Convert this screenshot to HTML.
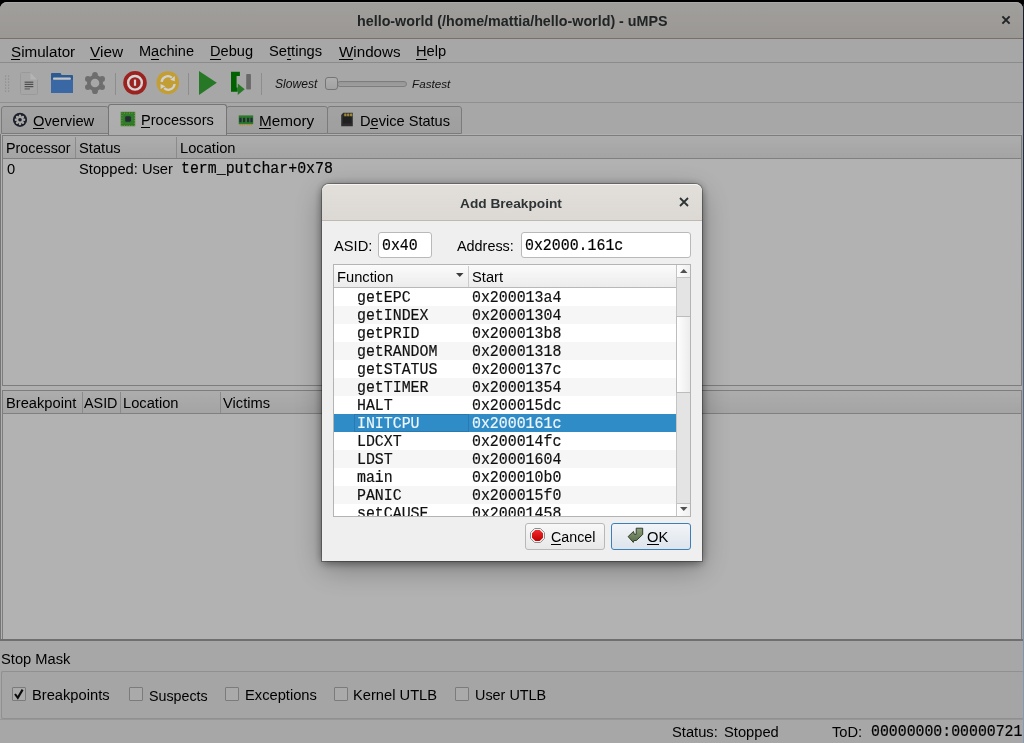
<!DOCTYPE html><html><head><meta charset="utf-8"><style>
*{box-sizing:border-box;margin:0;padding:0}
html,body{width:1024px;height:743px;overflow:hidden;background:#000;font-family:"Liberation Sans",sans-serif}
.t{position:absolute;line-height:1;white-space:nowrap;will-change:transform}
.b{position:absolute}
.m{-webkit-text-stroke:0.18px currentColor}
svg.b{overflow:visible}

</style></head><body>
<div class="b" style="left:0px;top:2px;width:1023px;height:741px;background:#efefef;border-radius:7px 7px 0 0"></div>
<div class="b" style="left:0px;top:2px;width:1023px;height:37px;background:linear-gradient(#e6e3df,#dedad5);border-radius:7px 7px 0 0;border-top:1px solid #f6f4f2;border-bottom:1px solid #aaa39b"></div>
<div class="t" style="left:356.8px;top:14.40px;font-size:14.3px;color:#2e3436;font-weight:bold;font-style:normal;font-family:'Liberation Sans', sans-serif;">hello-world (/home/mattia/hello-world) - uMPS</div>
<svg class="b" style="left:1001px;top:15px" width="10" height="10" viewBox="0 0 10 10"><path d="M1.4 1.4L8.6 8.6M8.6 1.4L1.4 8.6" stroke="#2e3436" stroke-width="2"/></svg>
<div class="b" style="left:0px;top:39px;width:1023px;height:24px;background:#efefef;border-bottom:1px solid #c8c8c8"></div>
<div class="t" style="left:10.6px;top:43.93px;font-size:15.2px;color:#000000;font-weight:normal;font-style:normal;font-family:'Liberation Sans', sans-serif;">Simulator</div>
<div class="b" style="left:10.6px;top:58.8px;width:9.8px;height:1px;background:#000000"></div>
<div class="t" style="left:90px;top:43.76px;font-size:15.4px;color:#000000;font-weight:normal;font-style:normal;font-family:'Liberation Sans', sans-serif;">View</div>
<div class="b" style="left:90.0px;top:58.8px;width:9.8px;height:1px;background:#000000"></div>
<div class="t" style="left:138.7px;top:44.48px;font-size:14.55px;color:#000000;font-weight:normal;font-style:normal;font-family:'Liberation Sans', sans-serif;">Machine</div>
<div class="b" style="left:150.93px;top:58.8px;width:8.17px;height:1px;background:#000000"></div>
<div class="t" style="left:209.9px;top:44.44px;font-size:14.6px;color:#000000;font-weight:normal;font-style:normal;font-family:'Liberation Sans', sans-serif;">Debug</div>
<div class="b" style="left:209.9px;top:58.8px;width:10.61px;height:1px;background:#000000"></div>
<div class="t" style="left:268.6px;top:44.36px;font-size:14.7px;color:#000000;font-weight:normal;font-style:normal;font-family:'Liberation Sans', sans-serif;">Settings</div>
<div class="b" style="left:286.57px;top:58.8px;width:4.08px;height:1px;background:#000000"></div>
<div class="t" style="left:338.8px;top:43.93px;font-size:15.2px;color:#000000;font-weight:normal;font-style:normal;font-family:'Liberation Sans', sans-serif;">Windows</div>
<div class="b" style="left:338.8px;top:58.8px;width:13.86px;height:1px;background:#000000"></div>
<div class="t" style="left:416.2px;top:44.36px;font-size:14.7px;color:#000000;font-weight:normal;font-style:normal;font-family:'Liberation Sans', sans-serif;">Help</div>
<div class="b" style="left:416.2px;top:58.8px;width:10.61px;height:1px;background:#000000"></div>
<div class="b" style="left:0px;top:63px;width:1023px;height:40px;background:#efefef;border-bottom:1px solid #cfcfcf"></div>
<div class="b" style="left:115px;top:73px;width:1px;height:22px;background:#cbcbcb"></div>
<div class="b" style="left:188px;top:73px;width:1px;height:22px;background:#cbcbcb"></div>
<div class="b" style="left:261px;top:73px;width:1px;height:22px;background:#cbcbcb"></div>
<div class="t" style="left:274.8px;top:77.86px;font-size:12.1px;color:#1a1a1a;font-weight:normal;font-style:italic;font-family:'Liberation Sans', sans-serif;">Slowest</div>
<div class="b" style="left:337px;top:81px;width:70px;height:6px;background:linear-gradient(#d8d8d8,#e4e4e4);border:1px solid #b4b4b4;border-radius:3px"></div>
<div class="b" style="left:325px;top:77px;width:13px;height:13px;background:linear-gradient(#fafafa,#e8e8e8);border:1px solid #a8a8a8;border-radius:3px"></div>
<div class="t" style="left:411.9px;top:78.20px;font-size:11.7px;color:#1a1a1a;font-weight:normal;font-style:italic;font-family:'Liberation Sans', sans-serif;">Fastest</div>
<div class="b" style="left:0px;top:134px;width:1023px;height:507px;background:#fdfdfd;border:1px solid #a8a8a8;border-top:none;border-right-color:#e8e8e8"></div>
<div class="b" style="left:1px;top:106px;width:108px;height:28px;background:linear-gradient(#eaeaea,#e3e3e3);border:1px solid #b0b0b0;border-radius:3px 3px 0 0"></div>
<div class="b" style="left:226px;top:106px;width:102px;height:28px;background:linear-gradient(#eaeaea,#e3e3e3);border:1px solid #b0b0b0;border-radius:3px 3px 0 0"></div>
<div class="b" style="left:327px;top:106px;width:135px;height:28px;background:linear-gradient(#eaeaea,#e3e3e3);border:1px solid #b0b0b0;border-radius:3px 3px 0 0"></div>
<div class="b" style="left:108px;top:104px;width:119px;height:32px;background:linear-gradient(#fbfbfb,#f6f6f6);border:1px solid #a8a8a8;border-bottom:none;border-radius:3px 3px 0 0"></div>
<div class="t" style="left:32.8px;top:113.66px;font-size:14.7px;color:#000000;font-weight:normal;font-style:normal;font-family:'Liberation Sans', sans-serif;">Overview</div>
<div class="b" style="left:32.8px;top:128.1px;width:11.42px;height:1px;background:#000000"></div>
<div class="t" style="left:140.6px;top:113.08px;font-size:14.55px;color:#000000;font-weight:normal;font-style:normal;font-family:'Liberation Sans', sans-serif;">Processors</div>
<div class="b" style="left:140.6px;top:127.39999999999999px;width:9.8px;height:1px;background:#000000"></div>
<div class="t" style="left:258.6px;top:113.15px;font-size:15.3px;color:#000000;font-weight:normal;font-style:normal;font-family:'Liberation Sans', sans-serif;">Memory</div>
<div class="b" style="left:258.6px;top:128.1px;width:12.23px;height:1px;background:#000000"></div>
<div class="t" style="left:359.6px;top:113.74px;font-size:14.6px;color:#000000;font-weight:normal;font-style:normal;font-family:'Liberation Sans', sans-serif;">Device Status</div>
<div class="b" style="left:370.21px;top:128.1px;width:8.17px;height:1px;background:#000000"></div>
<div class="b" style="left:2px;top:135px;width:1020px;height:251px;background:#ffffff;border:1px solid #b4b4b4"></div>
<div class="b" style="left:3px;top:136px;width:1018px;height:23px;background:linear-gradient(#f8f8f8,#ebebeb);border-bottom:1px solid #b8b8b8"></div>
<div class="b" style="left:75px;top:137px;width:1px;height:21px;background:#c8c8c8"></div>
<div class="b" style="left:176px;top:137px;width:1px;height:21px;background:#c8c8c8"></div>
<div class="t" style="left:5.9px;top:141.45px;font-size:14.35px;color:#000000;font-weight:normal;font-style:normal;font-family:'Liberation Sans', sans-serif;">Processor</div>
<div class="t" style="left:79px;top:141.16px;font-size:14.7px;color:#000000;font-weight:normal;font-style:normal;font-family:'Liberation Sans', sans-serif;">Status</div>
<div class="t" style="left:180px;top:141.16px;font-size:14.7px;color:#000000;font-weight:normal;font-style:normal;font-family:'Liberation Sans', sans-serif;">Location</div>
<div class="t" style="left:6.6px;top:161.76px;font-size:14.7px;color:#000000;font-weight:normal;font-style:normal;font-family:'Liberation Sans', sans-serif;">0</div>
<div class="t" style="left:79.2px;top:161.76px;font-size:14.7px;color:#000000;font-weight:normal;font-style:normal;font-family:'Liberation Sans', sans-serif;">Stopped: User</div>
<div class="t m" style="left:181px;top:161.98px;font-size:14.9px;color:#000000;font-weight:normal;font-style:normal;font-family:'Liberation Mono', monospace;transform:scaleY(1.135);transform-origin:0 11.42px;">term_putchar+0x78</div>
<div class="b" style="left:2px;top:390px;width:1020px;height:251px;background:#ffffff;border:1px solid #b4b4b4"></div>
<div class="b" style="left:3px;top:391px;width:1018px;height:23px;background:linear-gradient(#f8f8f8,#ebebeb);border-bottom:1px solid #b8b8b8"></div>
<div class="b" style="left:82px;top:392px;width:1px;height:21px;background:#c8c8c8"></div>
<div class="b" style="left:120px;top:392px;width:1px;height:21px;background:#c8c8c8"></div>
<div class="b" style="left:220px;top:392px;width:1px;height:21px;background:#c8c8c8"></div>
<div class="t" style="left:5.6px;top:395.86px;font-size:14.7px;color:#000000;font-weight:normal;font-style:normal;font-family:'Liberation Sans', sans-serif;">Breakpoint</div>
<div class="t" style="left:84.4px;top:396.15px;font-size:14.35px;color:#000000;font-weight:normal;font-style:normal;font-family:'Liberation Sans', sans-serif;">ASID</div>
<div class="t" style="left:123.4px;top:395.86px;font-size:14.7px;color:#000000;font-weight:normal;font-style:normal;font-family:'Liberation Sans', sans-serif;">Location</div>
<div class="t" style="left:223.4px;top:395.86px;font-size:14.7px;color:#000000;font-weight:normal;font-style:normal;font-family:'Liberation Sans', sans-serif;">Victims</div>
<div class="b" style="left:0px;top:639px;width:1023px;height:2px;background:#a0a0a0"></div>
<div class="t" style="left:0.6px;top:651.76px;font-size:14.7px;color:#000000;font-weight:normal;font-style:normal;font-family:'Liberation Sans', sans-serif;">Stop Mask</div>
<div class="b" style="left:1px;top:671px;width:1023px;height:48px;border:1px solid #cfcfcf;border-right:none;border-radius:2px;background:#ececec"></div>
<div class="b" style="left:12px;top:687px;width:14px;height:14px;background:#f4f4f4;border:1px solid #b0b0b0;border-radius:1px"></div>
<svg class="b" style="left:12px;top:687px" width="14" height="14" viewBox="0 0 14 14"><path d="M3 7L5.8 10.8L10.6 2.6" fill="none" stroke="#111" stroke-width="2.1"/></svg>
<div class="t" style="left:31.6px;top:688.16px;font-size:14.7px;color:#000000;font-weight:normal;font-style:normal;font-family:'Liberation Sans', sans-serif;">Breakpoints</div>
<div class="b" style="left:129px;top:687px;width:14px;height:14px;background:#f4f4f4;border:1px solid #b0b0b0;border-radius:1px"></div>
<div class="t" style="left:148.8px;top:688.54px;font-size:14.25px;color:#000000;font-weight:normal;font-style:normal;font-family:'Liberation Sans', sans-serif;">Suspects</div>
<div class="b" style="left:225px;top:687px;width:14px;height:14px;background:#f4f4f4;border:1px solid #b0b0b0;border-radius:1px"></div>
<div class="t" style="left:244.6px;top:688.16px;font-size:14.7px;color:#000000;font-weight:normal;font-style:normal;font-family:'Liberation Sans', sans-serif;">Exceptions</div>
<div class="b" style="left:334px;top:687px;width:14px;height:14px;background:#f4f4f4;border:1px solid #b0b0b0;border-radius:1px"></div>
<div class="t" style="left:353.3px;top:688.16px;font-size:14.7px;color:#000000;font-weight:normal;font-style:normal;font-family:'Liberation Sans', sans-serif;">Kernel UTLB</div>
<div class="b" style="left:455px;top:687px;width:14px;height:14px;background:#f4f4f4;border:1px solid #b0b0b0;border-radius:1px"></div>
<div class="t" style="left:474.5px;top:688.41px;font-size:14.4px;color:#000000;font-weight:normal;font-style:normal;font-family:'Liberation Sans', sans-serif;">User UTLB</div>
<div class="b" style="left:0px;top:719px;width:1023px;height:1px;background:#d8d8d8"></div>
<div class="t" style="left:671.7px;top:725.16px;font-size:14.7px;color:#000000;font-weight:normal;font-style:normal;font-family:'Liberation Sans', sans-serif;">Status:</div>
<div class="t" style="left:724px;top:725.16px;font-size:14.7px;color:#000000;font-weight:normal;font-style:normal;font-family:'Liberation Sans', sans-serif;">Stopped</div>
<div class="t" style="left:831.7px;top:725.16px;font-size:14.7px;color:#000000;font-weight:normal;font-style:normal;font-family:'Liberation Sans', sans-serif;">ToD:</div>
<div class="t m" style="left:870.5px;top:725.42px;font-size:14.85px;color:#000000;font-weight:normal;font-style:normal;font-family:'Liberation Mono', monospace;transform:scaleY(1.135);transform-origin:0 11.38px;">00000000:00000721</div>
<div id="dim" class="b" style="left:0;top:0;width:1024px;height:743px;background:rgba(0,0,0,0.3)"></div>
<div class="b" style="left:1023px;top:4px;width:1px;height:739px;background:linear-gradient(#161c2a,#283650 27%,#5a6a88 54%,#7a8aa4 75%,#8a9ab4)"></div>
<svg class="b" style="left:0px;top:0px" width="12" height="100" viewBox="0 0 12 100"><rect x="5" y="75.5" width="1.2" height="1.2" fill="#8a8a8a"/><rect x="5" y="78.5" width="1.2" height="1.2" fill="#8a8a8a"/><rect x="5" y="81.5" width="1.2" height="1.2" fill="#8a8a8a"/><rect x="5" y="84.5" width="1.2" height="1.2" fill="#8a8a8a"/><rect x="5" y="87.5" width="1.2" height="1.2" fill="#8a8a8a"/><rect x="5" y="90.5" width="1.2" height="1.2" fill="#8a8a8a"/><rect x="8" y="75.5" width="1.2" height="1.2" fill="#8a8a8a"/><rect x="8" y="78.5" width="1.2" height="1.2" fill="#8a8a8a"/><rect x="8" y="81.5" width="1.2" height="1.2" fill="#8a8a8a"/><rect x="8" y="84.5" width="1.2" height="1.2" fill="#8a8a8a"/><rect x="8" y="87.5" width="1.2" height="1.2" fill="#8a8a8a"/><rect x="8" y="90.5" width="1.2" height="1.2" fill="#8a8a8a"/></svg>
<svg class="b" style="left:20px;top:72px" width="18" height="23" viewBox="0 0 18 23"><path d="M0.5 1.5Q0.5 0.5 1.5 0.5H10.5L17.5 7.5V21.5Q17.5 22.5 16.5 22.5H1.5Q0.5 22.5 0.5 21.5Z" fill="#a6a6a6" stroke="#9a9a9a"/><path d="M10.5 0.5V7.5H17.5Z" fill="#b4b4b4"/><rect x="4.6" y="9.6" width="8.7" height="1.2" fill="#4e4e4e"/><rect x="4.6" y="11.8" width="8.7" height="1.2" fill="#4e4e4e"/><rect x="4.6" y="14" width="8.7" height="1.2" fill="#4e4e4e"/><rect x="4.6" y="16.2" width="5.3" height="1.4" fill="#6a6a6a"/></svg>
<svg class="b" style="left:51px;top:72px" width="22" height="22" viewBox="0 0 22 22"><path d="M0 1.8Q0 0.9 0.9 0.9H9.5L10.6 3H21.1Q22 3 22 3.9V20.1Q22 21 21.1 21H0.9Q0 21 0 20.1Z" fill="#2c5a92"/><rect x="2" y="5.4" width="17.8" height="2.6" rx="0.8" fill="#c4c4c4"/><path d="M0 7.8H22V20.1Q22 21 21.1 21H0.9Q0 21 0 20.1Z" fill="#3a68a4"/></svg>
<svg class="b" style="left:85px;top:72px" width="20" height="22" viewBox="0 0 20 22"><g fill="#6e6e6e"><circle cx="10" cy="11" r="8"/><circle cx="10.00" cy="2.80" r="2.9"/><circle cx="17.10" cy="6.90" r="2.9"/><circle cx="17.10" cy="15.10" r="2.9"/><circle cx="10.00" cy="19.20" r="2.9"/><circle cx="2.90" cy="15.10" r="2.9"/><circle cx="2.90" cy="6.90" r="2.9"/></g><circle cx="10" cy="11" r="4.3" fill="#a7a7a7"/></svg>
<svg class="b" style="left:123px;top:71px" width="24" height="24" viewBox="0 0 24 24"><circle cx="12" cy="11.8" r="11.8" fill="#9c2220"/><circle cx="12" cy="11.8" r="6.85" fill="none" stroke="#d4d6d6" stroke-width="2.4"/><rect x="10.9" y="8.6" width="2.2" height="6.2" fill="#d4d6d6"/></svg>
<svg class="b" style="left:156px;top:71px" width="24" height="24" viewBox="0 0 24 24"><path d="M12 0.2C18.5 0.2 23 4.5 23 11.6C23 18.8 18.5 23.2 11.8 23.2C5 23.2 0.5 18.6 0.5 11.6C0.5 4.6 5 0.2 12 0.2Z" fill="#c29e34"/><path d="M5.6 10.8A6.3 6.3 0 0 1 15.8 6.6" fill="none" stroke="#d2d2d2" stroke-width="2.3"/><path d="M14.2 8.7L18.8 5.1L18.8 10.3Z" fill="#d2d2d2"/><path d="M18.6 13A6.3 6.3 0 0 1 8.2 17.2" fill="none" stroke="#d2d2d2" stroke-width="2.3"/><path d="M4.5 13.1L4.7 18L9.3 15.2Z" fill="#d2d2d2"/></svg>
<svg class="b" style="left:194px;top:68px" width="64" height="30" viewBox="0 0 64 30"><path d="M5 3.1L22.8 14.7L5 26.9Z" fill="#267826"/><path d="M37 3.75H45.9V8H42.6V19.4H43.7V23.75H37Z" fill="#006200"/><path d="M43.75 15.6L50.75 21.25L43.75 26.9Z" fill="#267826"/><rect x="52.2" y="5.9" width="4.7" height="15.7" rx="0.8" fill="#686868"/></svg>
<svg class="b" style="left:12px;top:112px" width="16" height="16" viewBox="0 0 16 16"><circle cx="8" cy="7.8" r="7.1" fill="#1c1f2a"/><circle cx="12.10" cy="7.80" r="1.25" fill="#a8a8a8"/><circle cx="10.90" cy="10.70" r="1.25" fill="#a8a8a8"/><circle cx="8.00" cy="11.90" r="1.25" fill="#a8a8a8"/><circle cx="5.10" cy="10.70" r="1.25" fill="#a8a8a8"/><circle cx="3.90" cy="7.80" r="1.25" fill="#a8a8a8"/><circle cx="5.10" cy="4.90" r="1.25" fill="#a8a8a8"/><circle cx="8.00" cy="3.70" r="1.25" fill="#a8a8a8"/><circle cx="10.90" cy="4.90" r="1.25" fill="#a8a8a8"/><circle cx="8" cy="7.8" r="3.7" fill="#a8a8a8"/><circle cx="8" cy="7.8" r="1.8" fill="#1c1f2a"/></svg>
<svg class="b" style="left:120px;top:111px" width="16" height="16" viewBox="0 0 16 16"><rect x="0.7" y="0.8" width="14.5" height="14.4" fill="#2a7a2a"/><rect x="1.4" y="1.6" width="1.1" height="1.1" fill="#8a9030"/><rect x="1.4" y="4.1" width="1.1" height="1.1" fill="#8a9030"/><rect x="1.4" y="6.6" width="1.1" height="1.1" fill="#8a9030"/><rect x="1.4" y="9.1" width="1.1" height="1.1" fill="#8a9030"/><rect x="1.4" y="11.6" width="1.1" height="1.1" fill="#8a9030"/><rect x="1.4" y="14.1" width="1.1" height="1.1" fill="#8a9030"/><rect x="3.9" y="1.6" width="1.1" height="1.1" fill="#8a9030"/><rect x="3.9" y="14.1" width="1.1" height="1.1" fill="#8a9030"/><rect x="6.4" y="1.6" width="1.1" height="1.1" fill="#8a9030"/><rect x="6.4" y="14.1" width="1.1" height="1.1" fill="#8a9030"/><rect x="8.9" y="1.6" width="1.1" height="1.1" fill="#8a9030"/><rect x="8.9" y="14.1" width="1.1" height="1.1" fill="#8a9030"/><rect x="11.4" y="1.6" width="1.1" height="1.1" fill="#8a9030"/><rect x="11.4" y="14.1" width="1.1" height="1.1" fill="#8a9030"/><rect x="13.9" y="1.6" width="1.1" height="1.1" fill="#8a9030"/><rect x="13.9" y="4.1" width="1.1" height="1.1" fill="#8a9030"/><rect x="13.9" y="6.6" width="1.1" height="1.1" fill="#8a9030"/><rect x="13.9" y="9.1" width="1.1" height="1.1" fill="#8a9030"/><rect x="13.9" y="11.6" width="1.1" height="1.1" fill="#8a9030"/><rect x="13.9" y="14.1" width="1.1" height="1.1" fill="#8a9030"/><rect x="3.8" y="3.8" width="8.4" height="8.4" fill="none" stroke="#3a8030" stroke-width="0.8"/><rect x="5.2" y="5.2" width="5.7" height="5.6" rx="1.3" fill="#262b33"/></svg>
<svg class="b" style="left:238px;top:115px" width="16" height="11" viewBox="0 0 16 11"><rect x="0.7" y="0.4" width="14.5" height="8.8" fill="#2a7a2a"/><rect x="1.4" y="2.8" width="2.2" height="4.4" fill="#252a3a"/><rect x="5" y="2.8" width="2.2" height="4.4" fill="#252a3a"/><rect x="9" y="2.8" width="2.2" height="4.4" fill="#252a3a"/><rect x="12.4" y="2.8" width="2.2" height="4.4" fill="#252a3a"/><rect x="1.6" y="9" width="1.4" height="1.4" fill="#b08a30"/><rect x="3.6" y="9" width="1.4" height="1.4" fill="#b08a30"/><rect x="5.6" y="9" width="1.4" height="1.4" fill="#b08a30"/><rect x="8.6" y="9" width="1.4" height="1.4" fill="#b08a30"/><rect x="10.6" y="9" width="1.4" height="1.4" fill="#b08a30"/><rect x="12.6" y="9" width="1.4" height="1.4" fill="#b08a30"/></svg>
<svg class="b" style="left:341px;top:112px" width="13" height="15" viewBox="0 0 13 15"><path d="M2.2 0.8H11.8V14.2H0.2V3Z" fill="#2c2c2c"/><rect x="2" y="4.5" width="8.5" height="7" fill="#202020"/><rect x="3.2" y="1.6" width="2.3" height="2.6" rx="0.5" fill="#a08838"/><rect x="6.1" y="1.6" width="2.3" height="2.6" rx="0.5" fill="#a08838"/><rect x="9" y="1.6" width="2.3" height="2.6" rx="0.5" fill="#a08838"/></svg>
<div class="b" style="left:322px;top:184px;width:380px;height:377px;background:#efefef;border-radius:7px 7px 0 0;box-shadow:0 0 0 1px rgba(0,0,0,0.28),0 0 8px rgba(0,0,0,0.2),0 3px 10px rgba(0,0,0,0.32),0 8px 30px rgba(0,0,0,0.3)"></div>
<div class="b" style="left:322px;top:184px;width:380px;height:37px;background:linear-gradient(#e2dfdb,#dcd8d3);border-radius:7px 7px 0 0;border-top:1px solid #f6f4f2;border-bottom:1px solid #c0b9b1"></div>
<div class="t" style="left:460.3px;top:196.80px;font-size:13.7px;color:#2e3436;font-weight:bold;font-style:normal;font-family:'Liberation Sans', sans-serif;">Add Breakpoint</div>
<svg class="b" style="left:679.2px;top:197px" width="10" height="10" viewBox="0 0 10 10"><path d="M1 1L9 9M9 1L1 9" stroke="#2e3436" stroke-width="1.8"/></svg>
<div class="t" style="left:333.6px;top:238.86px;font-size:14.7px;color:#000000;font-weight:normal;font-style:normal;font-family:'Liberation Sans', sans-serif;">ASID:</div>
<div class="b" style="left:378px;top:232px;width:54px;height:26px;background:#fff;border:1px solid #b9b9b9;border-radius:3px"></div>
<div class="t m" style="left:381.6px;top:239.08px;font-size:14.9px;color:#000000;font-weight:normal;font-style:normal;font-family:'Liberation Mono', monospace;transform:scaleY(1.135);transform-origin:0 11.42px;">0x40</div>
<div class="t" style="left:457px;top:239.11px;font-size:14.4px;color:#000000;font-weight:normal;font-style:normal;font-family:'Liberation Sans', sans-serif;">Address:</div>
<div class="b" style="left:521px;top:232px;width:170px;height:26px;background:#fff;border:1px solid #b9b9b9;border-radius:3px"></div>
<div class="t m" style="left:524.8px;top:239.08px;font-size:14.9px;color:#000000;font-weight:normal;font-style:normal;font-family:'Liberation Mono', monospace;transform:scaleY(1.135);transform-origin:0 11.42px;">0x2000.161c</div>
<div class="b" style="left:333px;top:264px;width:358px;height:253px;background:#fff;border:1px solid #b4b4b4"></div>
<div class="b" style="left:334px;top:265px;width:342px;height:23px;background:linear-gradient(#fbfbfb,#ececec);border-bottom:1px solid #b8b8b8"></div>
<div class="b" style="left:468px;top:266px;width:1px;height:21px;background:#cccccc"></div>
<div class="t" style="left:337px;top:270.06px;font-size:14.7px;color:#000000;font-weight:normal;font-style:normal;font-family:'Liberation Sans', sans-serif;">Function</div>
<svg class="b" style="left:456px;top:273px" width="8" height="5" viewBox="0 0 8 5"><path d="M0 0H7.5L3.75 4Z" fill="#3c3c3c"/></svg>
<div class="t" style="left:472px;top:270.06px;font-size:14.7px;color:#000000;font-weight:normal;font-style:normal;font-family:'Liberation Sans', sans-serif;">Start</div>
<div class="b" style="left:334px;top:288px;width:342px;height:228px;overflow:hidden">
<div class="b" style="left:0;top:0px;width:342px;height:18px;background:#ffffff"></div>
<div class="t m" style="left:23px;top:2.58px;font-size:14.9px;font-family:'Liberation Mono', monospace;color:#101010;transform:scaleY(1.135);transform-origin:0 11.42px">getEPC</div>
<div class="t m" style="left:138px;top:2.58px;font-size:14.9px;font-family:'Liberation Mono', monospace;color:#101010;transform:scaleY(1.135);transform-origin:0 11.42px">0x200013a4</div>
<div class="b" style="left:0;top:18px;width:342px;height:18px;background:#f6f6f6"></div>
<div class="t m" style="left:23px;top:20.58px;font-size:14.9px;font-family:'Liberation Mono', monospace;color:#101010;transform:scaleY(1.135);transform-origin:0 11.42px">getINDEX</div>
<div class="t m" style="left:138px;top:20.58px;font-size:14.9px;font-family:'Liberation Mono', monospace;color:#101010;transform:scaleY(1.135);transform-origin:0 11.42px">0x20001304</div>
<div class="b" style="left:0;top:36px;width:342px;height:18px;background:#ffffff"></div>
<div class="t m" style="left:23px;top:38.58px;font-size:14.9px;font-family:'Liberation Mono', monospace;color:#101010;transform:scaleY(1.135);transform-origin:0 11.42px">getPRID</div>
<div class="t m" style="left:138px;top:38.58px;font-size:14.9px;font-family:'Liberation Mono', monospace;color:#101010;transform:scaleY(1.135);transform-origin:0 11.42px">0x200013b8</div>
<div class="b" style="left:0;top:54px;width:342px;height:18px;background:#f6f6f6"></div>
<div class="t m" style="left:23px;top:56.58px;font-size:14.9px;font-family:'Liberation Mono', monospace;color:#101010;transform:scaleY(1.135);transform-origin:0 11.42px">getRANDOM</div>
<div class="t m" style="left:138px;top:56.58px;font-size:14.9px;font-family:'Liberation Mono', monospace;color:#101010;transform:scaleY(1.135);transform-origin:0 11.42px">0x20001318</div>
<div class="b" style="left:0;top:72px;width:342px;height:18px;background:#ffffff"></div>
<div class="t m" style="left:23px;top:74.58px;font-size:14.9px;font-family:'Liberation Mono', monospace;color:#101010;transform:scaleY(1.135);transform-origin:0 11.42px">getSTATUS</div>
<div class="t m" style="left:138px;top:74.58px;font-size:14.9px;font-family:'Liberation Mono', monospace;color:#101010;transform:scaleY(1.135);transform-origin:0 11.42px">0x2000137c</div>
<div class="b" style="left:0;top:90px;width:342px;height:18px;background:#f6f6f6"></div>
<div class="t m" style="left:23px;top:92.58px;font-size:14.9px;font-family:'Liberation Mono', monospace;color:#101010;transform:scaleY(1.135);transform-origin:0 11.42px">getTIMER</div>
<div class="t m" style="left:138px;top:92.58px;font-size:14.9px;font-family:'Liberation Mono', monospace;color:#101010;transform:scaleY(1.135);transform-origin:0 11.42px">0x20001354</div>
<div class="b" style="left:0;top:108px;width:342px;height:18px;background:#ffffff"></div>
<div class="t m" style="left:23px;top:110.58px;font-size:14.9px;font-family:'Liberation Mono', monospace;color:#101010;transform:scaleY(1.135);transform-origin:0 11.42px">HALT</div>
<div class="t m" style="left:138px;top:110.58px;font-size:14.9px;font-family:'Liberation Mono', monospace;color:#101010;transform:scaleY(1.135);transform-origin:0 11.42px">0x200015dc</div>
<div class="b" style="left:0;top:126px;width:342px;height:18px;background:#308cc6"></div>
<div class="b" style="left:20px;top:126px;width:115px;height:18px;border:1px solid rgba(20,60,100,0.22)"></div>
<div class="t m" style="left:23px;top:128.58px;font-size:14.9px;font-family:'Liberation Mono', monospace;color:#eef6fc;transform:scaleY(1.135);transform-origin:0 11.42px">INITCPU</div>
<div class="t m" style="left:138px;top:128.58px;font-size:14.9px;font-family:'Liberation Mono', monospace;color:#eef6fc;transform:scaleY(1.135);transform-origin:0 11.42px">0x2000161c</div>
<div class="b" style="left:0;top:144px;width:342px;height:18px;background:#ffffff"></div>
<div class="t m" style="left:23px;top:146.58px;font-size:14.9px;font-family:'Liberation Mono', monospace;color:#101010;transform:scaleY(1.135);transform-origin:0 11.42px">LDCXT</div>
<div class="t m" style="left:138px;top:146.58px;font-size:14.9px;font-family:'Liberation Mono', monospace;color:#101010;transform:scaleY(1.135);transform-origin:0 11.42px">0x200014fc</div>
<div class="b" style="left:0;top:162px;width:342px;height:18px;background:#f6f6f6"></div>
<div class="t m" style="left:23px;top:164.58px;font-size:14.9px;font-family:'Liberation Mono', monospace;color:#101010;transform:scaleY(1.135);transform-origin:0 11.42px">LDST</div>
<div class="t m" style="left:138px;top:164.58px;font-size:14.9px;font-family:'Liberation Mono', monospace;color:#101010;transform:scaleY(1.135);transform-origin:0 11.42px">0x20001604</div>
<div class="b" style="left:0;top:180px;width:342px;height:18px;background:#ffffff"></div>
<div class="t m" style="left:23px;top:182.58px;font-size:14.9px;font-family:'Liberation Mono', monospace;color:#101010;transform:scaleY(1.135);transform-origin:0 11.42px">main</div>
<div class="t m" style="left:138px;top:182.58px;font-size:14.9px;font-family:'Liberation Mono', monospace;color:#101010;transform:scaleY(1.135);transform-origin:0 11.42px">0x200010b0</div>
<div class="b" style="left:0;top:198px;width:342px;height:18px;background:#f6f6f6"></div>
<div class="t m" style="left:23px;top:200.58px;font-size:14.9px;font-family:'Liberation Mono', monospace;color:#101010;transform:scaleY(1.135);transform-origin:0 11.42px">PANIC</div>
<div class="t m" style="left:138px;top:200.58px;font-size:14.9px;font-family:'Liberation Mono', monospace;color:#101010;transform:scaleY(1.135);transform-origin:0 11.42px">0x200015f0</div>
<div class="b" style="left:0;top:216px;width:342px;height:18px;background:#ffffff"></div>
<div class="t m" style="left:23px;top:218.58px;font-size:14.9px;font-family:'Liberation Mono', monospace;color:#101010;transform:scaleY(1.135);transform-origin:0 11.42px">setCAUSE</div>
<div class="t m" style="left:138px;top:218.58px;font-size:14.9px;font-family:'Liberation Mono', monospace;color:#101010;transform:scaleY(1.135);transform-origin:0 11.42px">0x20001458</div>
</div>
<div class="b" style="left:676px;top:265px;width:14px;height:251px;background:#e4e4e4;border-left:1px solid #c4c4c4"></div>
<div class="b" style="left:676px;top:265px;width:14px;height:13px;background:linear-gradient(90deg,#fdfdfd,#f0f0f0);border-left:1px solid #c4c4c4;border-bottom:1px solid #c4c4c4"></div>
<svg class="b" style="left:679.5px;top:269px" width="8" height="5" viewBox="0 0 8 5"><path d="M0 4H7.5L3.75 0Z" fill="#505050"/></svg>
<div class="b" style="left:676px;top:316px;width:14px;height:77px;background:linear-gradient(90deg,#fefefe,#ececec);border:1px solid #bcbcbc;border-right:none"></div>
<div class="b" style="left:676px;top:503px;width:14px;height:13px;background:linear-gradient(90deg,#fdfdfd,#f0f0f0);border-left:1px solid #c4c4c4;border-top:1px solid #c4c4c4"></div>
<svg class="b" style="left:679.5px;top:507px" width="8" height="5" viewBox="0 0 8 5"><path d="M0 0H7.5L3.75 4Z" fill="#505050"/></svg>
<div class="b" style="left:525px;top:523px;width:80px;height:27px;background:linear-gradient(#f8f8f8,#e8e8e8);border:1px solid #b8b8b8;border-radius:3px"></div>
<svg class="b" style="left:526px;top:524px" width="24" height="24" viewBox="0 0 24 24"><defs><linearGradient id="rg" x1="0" y1="0" x2="0" y2="1"><stop offset="0" stop-color="#f22a2a"/><stop offset="1" stop-color="#c00000"/></linearGradient></defs><path d="M8.6 4.5H14.4L18.5 8.6V14.4L14.4 18.5H8.6L4.5 14.4V8.6Z" fill="#f4f8f8" stroke="#8a8c8a" stroke-width="1"/><path d="M9.3 6H13.7L17 9.3V13.7L13.7 17H9.3L6 13.7V9.3Z" fill="url(#rg)"/></svg>
<div class="t" style="left:550.5px;top:530.44px;font-size:14.25px;color:#000000;font-weight:normal;font-style:normal;font-family:'Liberation Sans', sans-serif;">Cancel</div>
<div class="b" style="left:550.5px;top:543.7px;width:10.61px;height:1px;background:#000000"></div>
<div class="b" style="left:611px;top:523px;width:80px;height:27px;background:linear-gradient(#f2f5f8,#dde4ec);border:1px solid #3a7fba;border-radius:3px"></div>
<svg class="b" style="left:622px;top:524px" width="24" height="24" viewBox="0 0 24 24"><defs><linearGradient id="gg" x1="0" y1="0" x2="0" y2="1"><stop offset="0" stop-color="#8aa078"/><stop offset="1" stop-color="#566a48"/></linearGradient></defs><path d="M14.2 4.2H20.7V10.5L14.4 16.5H12L11.3 18.4L6.1 12.6L11.5 7.4L12.3 10.3H14.2Z" fill="url(#gg)" stroke="#283020" stroke-width="0.9" stroke-linejoin="round"/></svg>
<div class="t" style="left:647.4px;top:530.06px;font-size:14.7px;color:#000000;font-weight:normal;font-style:normal;font-family:'Liberation Sans', sans-serif;">OK</div>
<div class="b" style="left:647.4px;top:543.7px;width:11.42px;height:1px;background:#000000"></div>
</body></html>
